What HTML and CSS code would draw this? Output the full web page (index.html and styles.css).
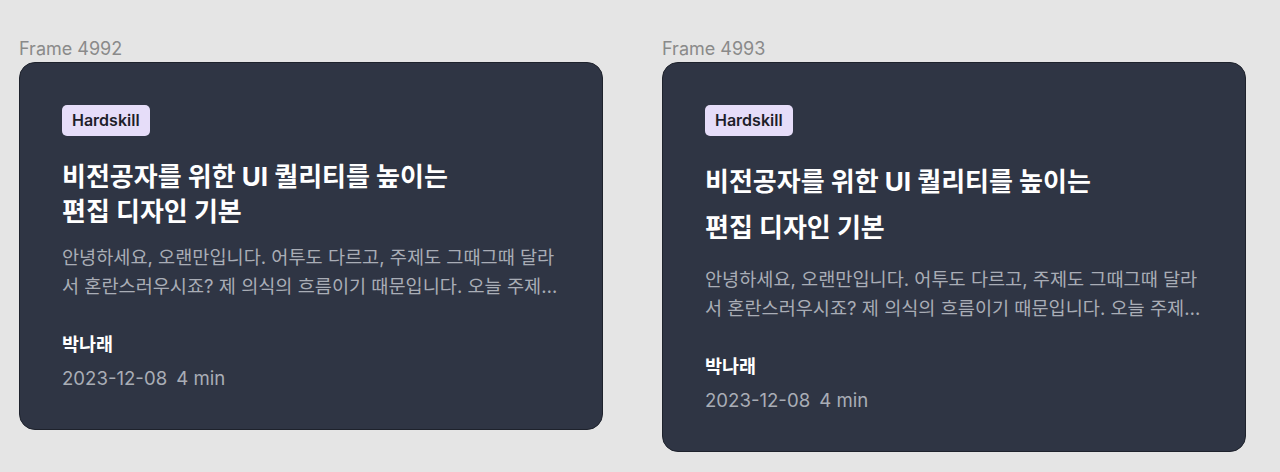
FILE: index.html
```html
<!DOCTYPE html>
<html lang="ko">
<head>
    <meta charset="UTF-8">
    <meta name="viewport" content="width=device-width, initial-scale=1.0">
    <title>Frames - 아티클 카드</title>
    <link rel="stylesheet" href="styles.css">
</head>
<body>
    <div class="frames">
        <div class="frame">
            <div class="frame-label">Frame 4992</div>
            <article class="card">
                <span class="tag">Hardskill</span>
                <h2 class="card-title">비전공자를 위한 UI 퀄리티를 높이는<br>편집 디자인 기본</h2>
                <p class="card-desc">안녕하세요, 오랜만입니다. 어투도 다르고, 주제도 그때그때 달라서 혼란스러우시죠? 제 의식의 흐름이기 때문입니다. 오늘 주제는 편집 디자인입니다.</p>
                <div class="author">박나래</div>
                <div class="meta">
                    <span>2023-12-08</span>
                    <span>4 min</span>
                </div>
            </article>
        </div>

        <div class="frame">
            <div class="frame-label">Frame 4993</div>
            <article class="card card-loose">
                <span class="tag">Hardskill</span>
                <h2 class="card-title">비전공자를 위한 UI 퀄리티를 높이는<br>편집 디자인 기본</h2>
                <p class="card-desc">안녕하세요, 오랜만입니다. 어투도 다르고, 주제도 그때그때 달라서 혼란스러우시죠? 제 의식의 흐름이기 때문입니다. 오늘 주제는 편집 디자인입니다.</p>
                <div class="author">박나래</div>
                <div class="meta">
                    <span>2023-12-08</span>
                    <span>4 min</span>
                </div>
            </article>
        </div>
    </div>
</body>
</html>
```

FILE: styles.css
```css
body {
    margin: 0;
    background-color: #e5e5e5;
    font-family: "Inter", "Noto Sans CJK KR", sans-serif;
}
.frames {
    display: flex;
    align-items: flex-start;
    gap: 59px;
    padding: 38px 0 0 19px;
}
.frame {
    width: 584px;
}
.frame-label {
    font-size: 18px;
    line-height: 21px;
    color: #8a8a8a;
    margin-bottom: 3px;
}
.card {
    display: flex;
    flex-direction: column;
    align-items: flex-start;
    background-color: #2f3544;
    border: 1px solid #1e222c;
    border-radius: 16px;
    padding: 42px 42px 39px;
}
.tag {
    background-color: #e6ddf9;
    color: #1e1e2a;
    font-size: 16px;
    font-weight: 600;
    line-height: 19px;
    padding: 6px 10px;
    border-radius: 5px;
}
.card-title {
    margin: 23px 0 0;
    color: #ffffff;
    font-size: 26px;
    font-weight: 700;
    line-height: 35px;
}
.card-loose .card-title {
    line-height: 46px;
}
.card-desc {
    margin: 14px 0 0;
    color: #a9adb6;
    font-size: 18.6px;
    line-height: 29px;
    display: -webkit-box;
    -webkit-line-clamp: 2;
    -webkit-box-orient: vertical;
    overflow: hidden;
}
.author {
    margin-top: 31px;
    color: #ffffff;
    font-size: 18.5px;
    font-weight: 700;
    line-height: 24px;
}
.meta {
    display: flex;
    gap: 9px;
    margin-top: 10px;
    color: #a9adb6;
    font-size: 18.6px;
    line-height: 24px;
}
```
